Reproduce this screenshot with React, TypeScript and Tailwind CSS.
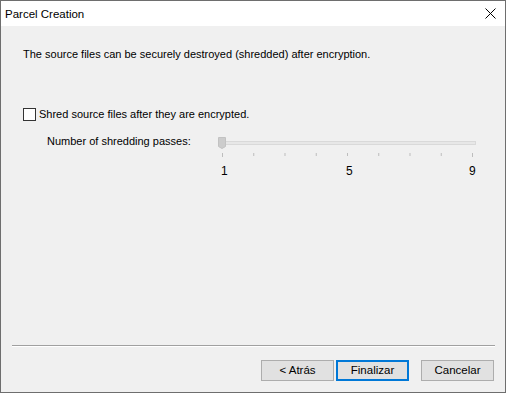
import React from "react"

const ticks = [0, 1, 2, 3, 4, 5, 6, 7, 8]

function Slider() {
  return (
    <div className="w-[262px] flex flex-col">
      <svg width="262" height="26" viewBox="0 0 262 26">
        {/* track */}
        <rect x="5.5" y="8.5" width="253" height="3" fill="#e7e7e7" stroke="#d9d9d9" />
        {/* thumb */}
        <path d="M1.5 4.5 H8.5 V13.5 L5 15.5 L1.5 13.5 Z" fill="#cccccc" stroke="#c2c2c2" />
        {/* ticks */}
        {ticks.map((t) => (
          <line
            key={t}
            x1={5.5 + t * 31.25}
            x2={5.5 + t * 31.25}
            y1={20}
            y2={t === 0 || t === 8 ? 24 : 23}
            stroke="#bdbdbd"
          />
        ))}
      </svg>
      <div className="relative h-[16px] mt-[4px] leading-[16px] text-[12px]">
        <span className="absolute left-[4px]">1</span>
        <span className="absolute left-[129px]">5</span>
        <span className="absolute left-[252px]">9</span>
      </div>
    </div>
  )
}

function Boton({
  children,
  padrao,
}: {
  children: React.ReactNode
  padrao?: boolean
}) {
  return (
    <button
      className={
        padrao
          ? "w-[73px] h-[21px] bg-[#e1e1e1] border-2 border-[#0078d7] text-[11.5px] leading-none"
          : "w-[73px] h-[21px] bg-[#e1e1e1] border border-[#adadad] text-[11.5px] leading-none"
      }
    >
      {children}
    </button>
  )
}

export default function App() {
  return (
    <div
      className="w-[506px] h-[393px] flex flex-col border border-[#6e6e6e] bg-[#f0f0f0] text-black text-[11px] leading-[16px]"
      style={{ fontFamily: "'Liberation Sans', Arial, sans-serif" }}
    >
      {/* TITULO */}
      <div className="h-[25px] bg-white flex items-center justify-between pl-[4px] pr-[9px]">
        <span className="text-[11.5px]">Parcel Creation</span>
        <svg width="11" height="11" viewBox="0 0 11 11">
          <path d="M0.5 0.5 L10.5 10.5 M10.5 0.5 L0.5 10.5" stroke="#000" strokeWidth="1" />
        </svg>
      </div>

      {/* CONTEUDO */}
      <div className="flex-1 flex flex-col">
        <div className="pl-[22px] pt-[20px]">
          The source files can be securely destroyed (shredded) after encryption.
        </div>

        <div className="flex items-center pl-[22px] mt-[44px] h-[16px]">
          <div className="w-[13px] h-[13px] border border-[#333] bg-white" />
          <span className="ml-[3px]">Shred source files after they are encrypted.</span>
        </div>

        <div className="flex items-start mt-[11px]">
          <span className="pl-[46px] w-[216px]">Number of shredding passes:</span>
          <Slider />
        </div>

        {/* RODAPE */}
        <div className="mt-auto">
          <div className="ml-[11px] mr-[10px] border-t border-[#a0a0a0] border-b border-b-white" />
          <div className="flex justify-end pr-[11px] mt-[13px] mb-[11px]">
            <Boton>&lt; Atrás</Boton>
            <div className="w-[2px]" />
            <Boton padrao>Finalizar</Boton>
            <div className="w-[12px]" />
            <Boton>Cancelar</Boton>
          </div>
        </div>
      </div>
    </div>
  )
}
